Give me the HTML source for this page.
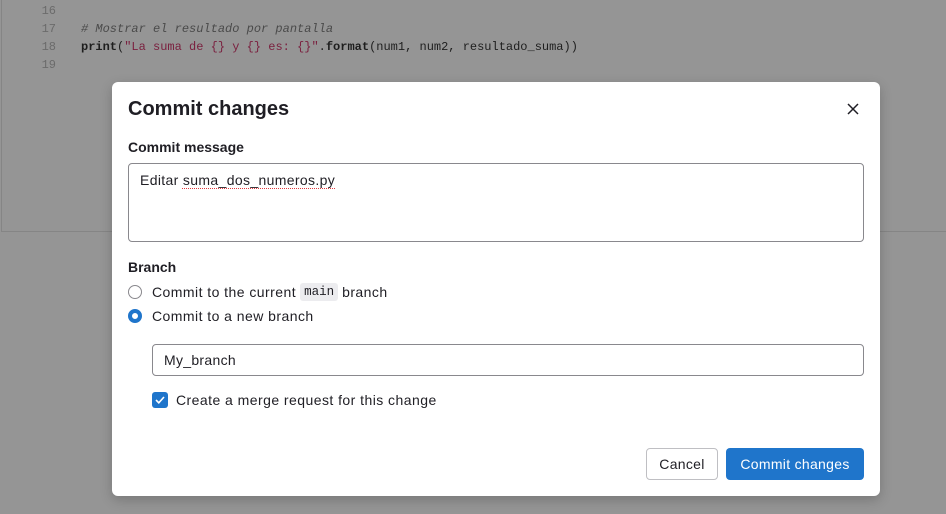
<!DOCTYPE html>
<html><head><style>
body{margin:0;width:946px;height:514px;background:#959595;position:relative;overflow:hidden;font-family:"Liberation Sans",sans-serif;color:#1f1e24}
.ed{position:absolute;left:1px;top:-2px;width:950px;height:234px;border-left:1px solid #858585;border-bottom:1px solid #858585;box-sizing:border-box}
.code{position:absolute;left:0;top:2px;font-family:"Liberation Mono",monospace;font-size:12px;line-height:18px}
.ln{position:absolute;left:34px;width:22px;text-align:right;color:#6b6b6b}
.cl{position:absolute;left:81px;white-space:pre;color:#1e1e1e}
.s{color:#7a1f3e}
.modal{position:absolute;left:112px;top:82px;width:768px;height:414px;background:#fff;border-radius:6px;box-shadow:0 4px 12px rgba(0,0,0,.2)}
h1{position:absolute;left:16px;top:16px;margin:0;font-size:20px;font-weight:bold}
.x{position:absolute;left:735px;top:21px}
.lbl{position:absolute;left:16px;font-size:14px;font-weight:bold}
.ta{position:absolute;left:16px;top:81px;width:736px;height:79px;border:1px solid #89888d;border-radius:4px;box-sizing:border-box;padding:8px 11px;font-size:14px;letter-spacing:.35px}
.sp{text-decoration:underline dotted #e0393e;text-decoration-thickness:1px;text-underline-offset:3px}
.r{position:absolute;left:16px;font-size:14px;display:flex;align-items:center;letter-spacing:.45px}
.rd{width:14px;height:14px;border:1px solid #89888d;border-radius:50%;margin-right:10px;box-sizing:border-box}
.rd.on{border:4px solid #1f75cb}
code{font-family:"Liberation Mono",monospace;font-size:12.5px;background:#ececef;padding:2px 4px;border-radius:3px;margin:0 4px;letter-spacing:0}
.in{position:absolute;left:40px;top:262px;width:712px;height:32px;border:1px solid #89888d;border-radius:4px;box-sizing:border-box;padding:7px 11px;font-size:14px;letter-spacing:.3px}
.cb{position:absolute;left:40px;top:310px;display:flex;align-items:center;font-size:14px;letter-spacing:.45px}
.cbx{width:16px;height:16px;background:#1f75cb;border-radius:3px;margin-right:8px;display:flex;align-items:center;justify-content:center}
.btn{position:absolute;top:366px;height:32px;border-radius:4px;box-sizing:border-box;font-size:14px;display:flex;align-items:center;justify-content:center;letter-spacing:.3px}
</style></head><body>
<div class="ed"></div>
<div class="code">
<div class="ln" style="top:0">16</div>
<div class="ln" style="top:18px">17</div><div class="cl" style="top:18px;color:#4a4a4a;font-style:italic"># Mostrar el resultado por pantalla</div>
<div class="ln" style="top:36px">18</div><div class="cl" style="top:36px"><b>print</b>(<span class="s">"La suma de {} y {} es: {}"</span>.<b>format</b>(num1, num2, resultado_suma))</div>
<div class="ln" style="top:54px">19</div>
</div>
<div class="modal">
<h1>Commit changes</h1>
<svg class="x" width="12" height="12" viewBox="0 0 12 12"><path d="M1 1L11 11M11 1L1 11" stroke="#1f1e24" stroke-width="1.5"/></svg>
<div class="lbl" style="top:57px">Commit message</div>
<div class="ta">Editar <span class="sp">suma_dos_numeros.py</span></div>
<div class="lbl" style="top:177px">Branch</div>
<div class="r" style="top:201px"><div class="rd"></div>Commit to the current <code>main</code> branch</div>
<div class="r" style="top:226px"><div class="rd on"></div>Commit to a new branch</div>
<div class="in">My_branch</div>
<div class="cb"><div class="cbx"><svg width="10" height="8" viewBox="0 0 10 8"><path d="M1 4L3.8 6.8L9 1" stroke="#fff" stroke-width="1.6" fill="none"/></svg></div>Create a merge request for this change</div>
<div class="btn" style="left:534px;width:72px;border:1px solid #bfbfc3">Cancel</div>
<div class="btn" style="left:614px;width:138px;background:#1f75cb;color:#fff">Commit changes</div>
</div>
</body></html>
